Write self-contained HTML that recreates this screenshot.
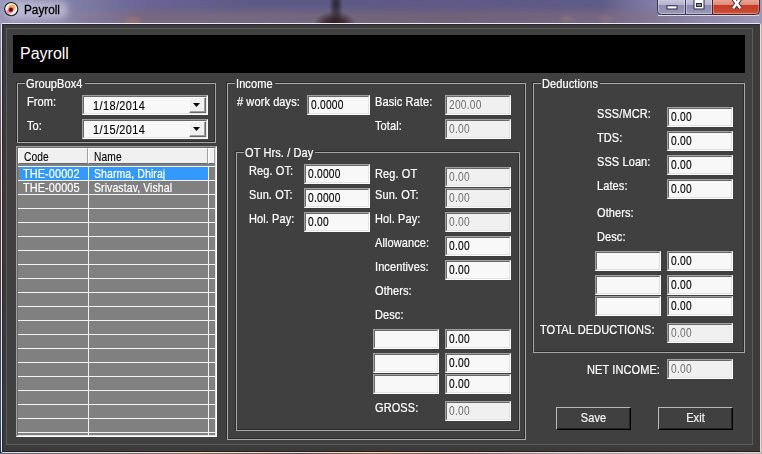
<!DOCTYPE html>
<html><head><meta charset="utf-8"><style>
*{margin:0;padding:0;box-sizing:border-box}
html,body{width:762px;height:454px;overflow:hidden;background:#4a4660;font-family:"Liberation Sans",sans-serif;font-size:11px}
.abs{position:absolute}
.lb,.gt{position:absolute;color:#fff;white-space:nowrap;line-height:13px;letter-spacing:0.1px;transform:scaleY(1.1);transform-origin:0 10.3px;-webkit-text-stroke:0.2px currentColor}
.gt{background:#404040;padding:0 2px 0 1px}
.gd{position:absolute;border-left:1px solid #2c2c2c;border-top:1px solid #2c2c2c;border-right:1px solid #2c2c2c;border-bottom:1px solid #2c2c2c}
.gl{position:absolute;border-left:1px solid #a8a8a8;border-top:1px solid #a8a8a8;border-right:1px solid #a8a8a8;border-bottom:1px solid #a8a8a8}
.tb{position:absolute;background:#f8f8f8;border-top:1px solid #a0a0a0;border-left:1px solid #a0a0a0;border-right:1px solid #ffffff;border-bottom:1px solid #ffffff}
.tb:before{content:"";position:absolute;left:0;top:0;right:0;bottom:0;border-top:1px solid #696969;border-left:1px solid #696969;border-right:1px solid #e3e3e3;border-bottom:1px solid #e3e3e3}
.tb span{position:absolute;left:2.6px;top:3px;font-size:12px;line-height:13px;color:#000;transform:scaleX(0.85);letter-spacing:0.3px;transform-origin:0 0;-webkit-text-stroke:0.15px currentColor}
.tb.dis{background:#f0f0f0}
.tb.dis span{color:#6d6d6d;-webkit-text-stroke:0}
.btn{position:absolute;border-top:1px solid #b8b8b8;border-left:1px solid #b8b8b8;border-right:1px solid #000;border-bottom:1px solid #000}
.btn:before{content:"";position:absolute;left:0;top:0;right:0;bottom:0;border-right:1px solid #222;border-bottom:1px solid #222}
</style></head><body>

<div class="abs" style="left:0;top:0;width:762px;height:454px;background:linear-gradient(90deg,rgba(0,0,0,0) 0px,rgba(0,0,0,0) 740px,#c0b0b0 761px),linear-gradient(180deg,#9a96bc 0px,#6a5a60 120px,#5a3a30 200px,#4a3a40 300px,#305070 420px,#203050 454px)"></div>
<div class="abs" style="left:0;top:0;width:762px;height:24px;background:linear-gradient(90deg,#9a98bc 0px,#8482a8 60px,#6e6a98 130px,#6a6494 150px,#5d5a85 250px,#5f5a88 450px,#5e5b86 600px,#7a76a0 640px,#9a96bc 700px,#a09cc0 762px)"></div>
<div class="abs" style="left:0;top:0;width:762px;height:24px;background:linear-gradient(90deg,#9c98b8 0px,#8a86a8 60px,#7a6a88 130px,#766880 143px,#746880 253px,#706278 450px,#766682 603px,#8f88a8 703px,#9c98b8 762px);-webkit-mask-image:linear-gradient(180deg,transparent 6px,#000 15px)"></div>
<div class="abs" style="left:0;top:0;width:762px;height:24px;background:radial-gradient(ellipse 12px 6px at 133px 21px,rgba(180,125,100,0.55),rgba(180,125,100,0)),radial-gradient(ellipse 9px 5px at 567px 19px,rgba(160,130,120,0.45),rgba(160,130,120,0)),radial-gradient(ellipse 9px 5px at 606px 19px,rgba(160,130,120,0.4),rgba(160,130,120,0))"></div>
<div class="abs" style="left:0;top:0;width:762px;height:24px;background:radial-gradient(ellipse 21px 13px at 335px 24px,rgba(42,28,28,1) 0%,rgba(42,28,28,0.75) 45%,rgba(42,28,28,0) 100%),radial-gradient(ellipse 7px 22px at 336px 4px,rgba(40,32,44,0.9) 0%,rgba(40,32,44,0.5) 50%,rgba(40,32,44,0) 100%)"></div>
<div class="abs" style="left:0;top:0;width:762px;height:23px;overflow:hidden"><div class="abs" style="left:6px;top:1px;width:62px;height:18px;border-radius:8px;background:rgba(212,209,230,0.62);filter:blur(3.5px)"></div></div>
<div class="abs" style="left:24px;top:3px;font-size:12px;line-height:14px;color:#000;transform:scaleX(0.98);transform-origin:0 0;-webkit-text-stroke:0.3px #000">Payroll</div>
<svg class="abs" style="left:0;top:0" width="24" height="20" viewBox="0 0 24 20">
<defs><filter id="bl" x="-50%" y="-50%" width="200%" height="200%"><feGaussianBlur stdDeviation="0.6"/></filter></defs>
<circle cx="11.25" cy="9.1" r="6.6" fill="#f6f2f2" stroke="#1e1e1e" stroke-width="1.15"/>
<g filter="url(#bl)">
<ellipse cx="11.9" cy="7.6" rx="3.6" ry="3" fill="#f4a848" opacity="0.85"/>
<ellipse cx="9.3" cy="11.6" rx="2.8" ry="2.4" fill="#f080a8" opacity="0.8"/>
<circle cx="10.9" cy="9.8" r="2.5" fill="#e22a3a"/>
</g>
<circle cx="10.9" cy="9.8" r="2.2" fill="#d02030" opacity="0.8"/>
<circle cx="10.9" cy="9.7" r="1.35" fill="#000"/>
</svg>
<svg class="abs" style="left:650px;top:0" width="112" height="20" viewBox="650 0 112 20">
<defs>
<linearGradient id="gb" x1="0" y1="0" x2="0" y2="15" gradientUnits="userSpaceOnUse"><stop offset="0" stop-color="#c6c4dc"/><stop offset="0.33" stop-color="#b4b2d0"/><stop offset="0.36" stop-color="#8e8cae"/><stop offset="1" stop-color="#9a98b8"/></linearGradient>
<linearGradient id="gr" x1="0" y1="0" x2="0" y2="15" gradientUnits="userSpaceOnUse"><stop offset="0" stop-color="#e8a496"/><stop offset="0.33" stop-color="#de8a7a"/><stop offset="0.36" stop-color="#c63c28"/><stop offset="0.8" stop-color="#c84a36"/><stop offset="1" stop-color="#d87a68"/></linearGradient>
</defs>
<line x1="658" y1="15.5" x2="759" y2="15.5" stroke="#dcd8ec" stroke-width="1"/>
<path d="M657.5,-2 V10.5 Q657.5,14.5 661.5,14.5 H685.5 V-2 Z" fill="url(#gb)" stroke="#3a3850" stroke-width="1"/>
<path d="M685.5,-2 V14.5 H712.5 V-2 Z" fill="url(#gb)" stroke="#3a3850" stroke-width="1"/>
<path d="M712.5,-2 V14.5 H755.5 Q759.5,14.5 759.5,10.5 V-2 Z" fill="url(#gr)" stroke="#4a2420" stroke-width="1"/>
<path d="M658.5,-2 V10.5 Q658.5,13.5 661.5,13.5 H684.5 V-2" fill="none" stroke="rgba(255,255,255,0.35)" stroke-width="1"/>
<path d="M686.5,-2 V13.5 H711.5 V-2" fill="none" stroke="rgba(255,255,255,0.35)" stroke-width="1"/>
<path d="M713.5,-2 V13.5 H755.5 Q758.5,13.5 758.5,10.5 V-2" fill="none" stroke="rgba(255,220,210,0.35)" stroke-width="1"/>
<rect x="667" y="5.8" width="10" height="3.2" fill="#fff" stroke="#2a2a40" stroke-width="1"/>
<rect x="694" y="-1" width="10" height="10" fill="#fff" stroke="#2a2a40" stroke-width="1"/>
<rect x="696.5" y="3.5" width="5" height="3" fill="#8e8cae" stroke="#2a2a40" stroke-width="1"/>
<path d="M733.2,-1.5 L740.3,8.2 M740.3,-1.5 L733.2,8.2" stroke="#3a2a30" stroke-width="4.4" stroke-linecap="butt"/>
<path d="M733.2,-1.5 L740.3,8.2 M740.3,-1.5 L733.2,8.2" stroke="#fff" stroke-width="2.6" stroke-linecap="butt"/>
</svg>
<div class="abs" style="left:1px;top:23px;width:760px;height:430px;border:1px solid #ece8f0;border-right-color:#e8dcdc;border-bottom-color:#e4dcdc;border-radius:2px 2px 2px 2px;background:#3b3b3b"></div>
<div class="abs" style="left:2px;top:24px;width:758px;height:428px;border-left:1px solid #2a2838;border-top:1px solid #2a2838;border-bottom:1px solid #2a1c1a;border-radius:1px 1px 0 0"></div>
<div class="abs" style="left:0;top:453px;width:762px;height:1px;background:linear-gradient(90deg,#4a6a8a 0px,#607080 50px,#8a7050 200px,#5a4a40 300px,#9a6a40 370px,#7a5a48 450px,#a09090 560px,#c0b0b0 762px)"></div>
<div class="abs" style="left:6px;top:28px;width:747px;height:417px;border:1px solid #5c5c5c;background:#404040"></div>
<div class="abs" style="left:13px;top:35px;width:732px;height:38px;background:#000"></div>
<div class="abs" style="left:20px;top:45px;font-size:16px;line-height:18px;color:#fff">Payroll</div>
<div class="gd" style="left:16px;top:82px;width:199px;height:60px"></div>
<div class="gl" style="left:17px;top:83px;width:199px;height:60px"></div>
<div class="gt" style="left:25px;top:78px">GroupBox4</div>
<div class="lb" style="left:27px;top:96px;">From:</div>
<div class="lb" style="left:27px;top:120px;">To:</div>
<div class="tb" style="left:82px;top:95px;width:126px;height:20px"><span style="left:9.5px;top:4px;transform:scaleX(0.91);letter-spacing:0.45px">1/18/2014</span></div>
<div class="abs" style="left:189px;top:97px;width:17px;height:16px;background:#f0f0f0;border-top:1px solid #fff;border-left:1px solid #fff;border-right:1px solid #696969;border-bottom:1px solid #696969;box-shadow:inset -1px -1px 0 #a0a0a0"></div>
<div class="abs" style="left:193px;top:103px;width:7px;height:4px;background:#000;clip-path:polygon(0 0,100% 0,50% 100%)"></div>
<div class="tb" style="left:82px;top:119px;width:126px;height:20px"><span style="left:9.5px;top:4px;transform:scaleX(0.91);letter-spacing:0.45px">1/15/2014</span></div>
<div class="abs" style="left:189px;top:121px;width:17px;height:16px;background:#f0f0f0;border-top:1px solid #fff;border-left:1px solid #fff;border-right:1px solid #696969;border-bottom:1px solid #696969;box-shadow:inset -1px -1px 0 #a0a0a0"></div>
<div class="abs" style="left:193px;top:127px;width:7px;height:4px;background:#000;clip-path:polygon(0 0,100% 0,50% 100%)"></div>
<div class="tb" style="left:16px;top:146px;width:201px;height:291px;background:#808080"></div>
<div class="abs" style="left:18px;top:148px;width:70px;height:16px;background:#f0f0f0;border-top:1px solid #fff;border-left:1px solid #fff;border-right:1px solid #a0a0a0;border-bottom:1px solid #696969"></div>
<div class="abs" style="left:88px;top:148px;width:120px;height:16px;background:#f0f0f0;border-top:1px solid #fff;border-left:1px solid #fff;border-right:1px solid #a0a0a0;border-bottom:1px solid #696969"></div>
<div class="abs" style="left:208px;top:148px;width:7px;height:16px;background:#f0f0f0;border-top:1px solid #fff;border-left:1px solid #fff;border-right:1px solid #a0a0a0;border-bottom:1px solid #696969"></div>
<div class="lb" style="left:23.8px;top:151px;color:#000;transform:scale(0.93,1.1);transform-origin:0 10.3px;-webkit-text-stroke:0.1px #000">Code</div>
<div class="lb" style="left:94.2px;top:151px;color:#000;transform:scale(0.93,1.1);transform-origin:0 10.3px;-webkit-text-stroke:0.1px #000">Name</div>
<div class="abs" style="left:20px;top:167px;width:188px;height:13px;background:#3399ff"></div>
<div class="abs" style="left:18px;top:166px;width:197px;height:1px;background:#f2f2f2"></div>
<div class="abs" style="left:18px;top:180px;width:197px;height:1px;background:#f2f2f2"></div>
<div class="abs" style="left:18px;top:194px;width:197px;height:1px;background:#f2f2f2"></div>
<div class="abs" style="left:18px;top:208px;width:197px;height:1px;background:#f2f2f2"></div>
<div class="abs" style="left:18px;top:222px;width:197px;height:1px;background:#f2f2f2"></div>
<div class="abs" style="left:18px;top:236px;width:197px;height:1px;background:#f2f2f2"></div>
<div class="abs" style="left:18px;top:250px;width:197px;height:1px;background:#f2f2f2"></div>
<div class="abs" style="left:18px;top:264px;width:197px;height:1px;background:#f2f2f2"></div>
<div class="abs" style="left:18px;top:278px;width:197px;height:1px;background:#f2f2f2"></div>
<div class="abs" style="left:18px;top:292px;width:197px;height:1px;background:#f2f2f2"></div>
<div class="abs" style="left:18px;top:306px;width:197px;height:1px;background:#f2f2f2"></div>
<div class="abs" style="left:18px;top:320px;width:197px;height:1px;background:#f2f2f2"></div>
<div class="abs" style="left:18px;top:334px;width:197px;height:1px;background:#f2f2f2"></div>
<div class="abs" style="left:18px;top:348px;width:197px;height:1px;background:#f2f2f2"></div>
<div class="abs" style="left:18px;top:362px;width:197px;height:1px;background:#f2f2f2"></div>
<div class="abs" style="left:18px;top:376px;width:197px;height:1px;background:#f2f2f2"></div>
<div class="abs" style="left:18px;top:390px;width:197px;height:1px;background:#f2f2f2"></div>
<div class="abs" style="left:18px;top:404px;width:197px;height:1px;background:#f2f2f2"></div>
<div class="abs" style="left:18px;top:418px;width:197px;height:1px;background:#f2f2f2"></div>
<div class="abs" style="left:18px;top:432px;width:197px;height:1px;background:#f2f2f2"></div>
<div class="abs" style="left:88px;top:166px;width:1px;height:269px;background:#f2f2f2"></div>
<div class="abs" style="left:208px;top:166px;width:1px;height:269px;background:#f2f2f2"></div>
<div class="lb" style="left:23px;top:168px;color:#fff;font-size:12px;transform:scaleX(0.91);transform-origin:0 0">THE-00002</div>
<div class="lb" style="left:93.6px;top:168px;color:#fff;font-size:12px;transform:scaleX(0.875);transform-origin:0 0">Sharma, Dhiraj</div>
<div class="lb" style="left:23px;top:182px;color:#fff;font-size:12px;transform:scaleX(0.91);transform-origin:0 0">THE-00005</div>
<div class="lb" style="left:93.6px;top:182px;color:#fff;font-size:12px;transform:scaleX(0.875);transform-origin:0 0">Srivastav, Vishal</div>
<div class="gd" style="left:226px;top:82px;width:299px;height:357px"></div>
<div class="gl" style="left:227px;top:83px;width:299px;height:357px"></div>
<div class="gt" style="left:235px;top:78px">Income</div>
<div class="lb" style="left:237px;top:96px;"># work days:</div>
<div class="tb" style="left:307px;top:95px;width:63px;height:20px"><span>0.0000</span></div>
<div class="lb" style="left:375px;top:96px;">Basic Rate:</div>
<div class="tb dis" style="left:445px;top:95px;width:66px;height:20px"><span>200.00</span></div>
<div class="lb" style="left:375px;top:120px;">Total:</div>
<div class="tb dis" style="left:445px;top:119px;width:66px;height:20px"><span>0.00</span></div>
<div class="gd" style="left:235px;top:151px;width:284px;height:279px"></div>
<div class="gl" style="left:236px;top:152px;width:284px;height:279px"></div>
<div class="gt" style="left:244px;top:147px">OT Hrs. / Day</div>
<div class="lb" style="left:249px;top:165px;">Reg. OT:</div>
<div class="tb" style="left:304px;top:164px;width:66px;height:20px"><span>0.0000</span></div>
<div class="lb" style="left:249px;top:189px;">Sun. OT:</div>
<div class="tb" style="left:304px;top:188px;width:66px;height:20px"><span>0.0000</span></div>
<div class="lb" style="left:249px;top:213px;">Hol. Pay:</div>
<div class="tb" style="left:304px;top:212px;width:66px;height:20px"><span>0.00</span></div>
<div class="lb" style="left:375px;top:168px;">Reg. OT</div>
<div class="tb dis" style="left:445px;top:167px;width:66px;height:20px"><span>0.00</span></div>
<div class="lb" style="left:375px;top:189px;">Sun. OT:</div>
<div class="tb dis" style="left:445px;top:188px;width:66px;height:20px"><span>0.00</span></div>
<div class="lb" style="left:375px;top:213px;">Hol. Pay:</div>
<div class="tb dis" style="left:445px;top:212px;width:66px;height:20px"><span>0.00</span></div>
<div class="lb" style="left:375px;top:237px;">Allowance:</div>
<div class="tb" style="left:445px;top:236px;width:66px;height:20px"><span>0.00</span></div>
<div class="lb" style="left:375px;top:261px;">Incentives:</div>
<div class="tb" style="left:445px;top:260px;width:66px;height:20px"><span>0.00</span></div>
<div class="lb" style="left:375px;top:285px;">Others:</div>
<div class="lb" style="left:375px;top:309px;">Desc:</div>
<div class="tb" style="left:373px;top:329px;width:66px;height:20px"><span></span></div>
<div class="tb" style="left:445px;top:329px;width:66px;height:20px"><span>0.00</span></div>
<div class="tb" style="left:373px;top:353px;width:66px;height:20px"><span></span></div>
<div class="tb" style="left:445px;top:353px;width:66px;height:20px"><span>0.00</span></div>
<div class="tb" style="left:373px;top:374px;width:66px;height:20px"><span></span></div>
<div class="tb" style="left:445px;top:374px;width:66px;height:20px"><span>0.00</span></div>
<div class="lb" style="left:375px;top:402px;">GROSS:</div>
<div class="tb dis" style="left:445px;top:401px;width:66px;height:20px"><span>0.00</span></div>
<div class="gd" style="left:532px;top:82px;width:212px;height:270px"></div>
<div class="gl" style="left:533px;top:83px;width:212px;height:270px"></div>
<div class="gt" style="left:541px;top:78px">Deductions</div>
<div class="lb" style="left:597px;top:108px;">SSS/MCR:</div>
<div class="tb" style="left:667px;top:107px;width:66px;height:20px"><span>0.00</span></div>
<div class="lb" style="left:597px;top:132px;">TDS:</div>
<div class="tb" style="left:667px;top:131px;width:66px;height:20px"><span>0.00</span></div>
<div class="lb" style="left:597px;top:156px;">SSS Loan:</div>
<div class="tb" style="left:667px;top:155px;width:66px;height:20px"><span>0.00</span></div>
<div class="lb" style="left:597px;top:180px;">Lates:</div>
<div class="tb" style="left:667px;top:179px;width:66px;height:20px"><span>0.00</span></div>
<div class="lb" style="left:597px;top:207px;">Others:</div>
<div class="lb" style="left:597px;top:231px;">Desc:</div>
<div class="tb" style="left:595px;top:251px;width:66px;height:20px"><span></span></div>
<div class="tb" style="left:667px;top:251px;width:66px;height:20px"><span>0.00</span></div>
<div class="tb" style="left:595px;top:275px;width:66px;height:20px"><span></span></div>
<div class="tb" style="left:667px;top:275px;width:66px;height:20px"><span>0.00</span></div>
<div class="tb" style="left:595px;top:296px;width:66px;height:20px"><span></span></div>
<div class="tb" style="left:667px;top:296px;width:66px;height:20px"><span>0.00</span></div>
<div class="lb" style="left:540px;top:324px;">TOTAL DEDUCTIONS:</div>
<div class="tb dis" style="left:667px;top:323px;width:66px;height:20px"><span>0.00</span></div>
<div class="lb" style="left:587px;top:364px;">NET INCOME:</div>
<div class="tb dis" style="left:667px;top:359px;width:66px;height:20px"><span>0.00</span></div>
<div class="btn" style="left:556px;top:407px;width:75px;height:23px"></div>
<div class="lb" style="left:556px;width:75px;text-align:center;top:412px;color:#f4f4f4">Save</div>
<div class="btn" style="left:658px;top:407px;width:75px;height:23px"></div>
<div class="lb" style="left:658px;width:75px;text-align:center;top:412px;color:#f4f4f4">Exit</div>
</body></html>
